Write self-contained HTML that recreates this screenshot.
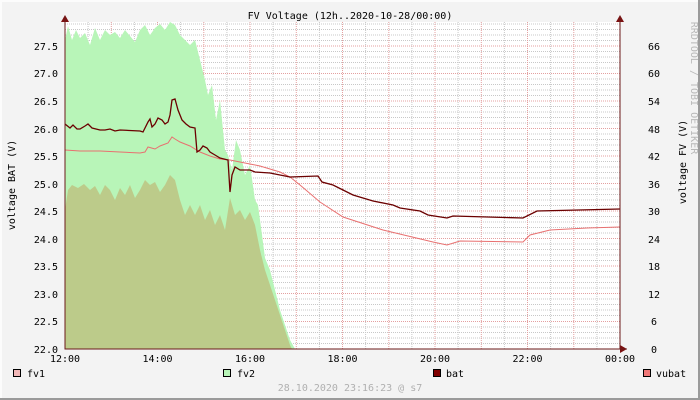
<!DOCTYPE html><html><head><style>body{margin:0}svg{display:block}text{font-family:"DejaVu Sans Mono","Liberation Mono",monospace;font-size:10px;fill:#000}</style></head><body>
<svg width="700" height="400" xmlns="http://www.w3.org/2000/svg">
<rect width="700" height="400" fill="#f3f3f3"/>
<rect x="0" y="0" width="700" height="2" fill="#fcfcfc"/><rect x="0" y="0" width="2" height="400" fill="#fcfcfc"/>
<rect x="698" y="0" width="2" height="400" fill="#9a9a9a"/><rect x="0" y="398" width="700" height="2" fill="#9a9a9a"/>
<rect x="65" y="22" width="555" height="327" fill="#fff"/>
<g stroke="#c8c8c8" stroke-width="1" stroke-dasharray="1,1">
<path d="M65 343.5H620M65 338H620M65 332.5H620M65 327H620M65 315.5H620M65 310H620M65 304.5H620M65 299H620M65 288H620M65 282.5H620M65 277H620M65 271.5H620M65 260.5H620M65 255H620M65 249.5H620M65 244H620M65 233H620M65 227.5H620M65 222H620M65 216.5H620M65 205.5H620M65 200H620M65 194.5H620M65 189H620M65 178H620M65 172.5H620M65 167H620M65 161.5H620M65 150.5H620M65 145H620M65 139.5H620M65 134H620M65 123H620M65 117.5H620M65 112H620M65 106.5H620M65 95.5H620M65 90H620M65 84.5H620M65 79H620M65 68H620M65 62.5H620M65 57H620M65 51.5H620M65 40.5H620M65 35H620M65 29.5H620M65 24H620"/>
<path d="M88.1 22V349M134.4 22V349M180.6 22V349M226.9 22V349M273.1 22V349M319.4 22V349M365.6 22V349M411.9 22V349M458.1 22V349M504.4 22V349M550.6 22V349M596.9 22V349"/>
</g>
<g stroke="#e4a0a0" stroke-width="1" stroke-dasharray="1,1">
<path d="M65 321.5H620M65 293.5H620M65 266H620M65 238.5H620M65 211H620M65 183.5H620M65 156H620M65 128.5H620M65 101H620M65 73.5H620M65 46H620"/>
<path d="M111.3 22V349M157.5 22V349M203.8 22V349M250 22V349M296.3 22V349M342.5 22V349M388.8 22V349M435 22V349M481.3 22V349M527.5 22V349M573.8 22V349"/>
</g>
<path fill="#b8f5b8" d="M65 349V40L68 26L72 40L76 30L80 38L85 33L90 45L95 28L100 40L105 30L110 35L115 32L120 38L125 30L130 36L135 42L140 30L145 25L150 35L155 28L160 24L165 30L170 22L175 25L180 35L185 40L190 45L195 40L200 60L205 80L208 95L212 85L216 120L220 100L225 150L228 155L232 170L236 140L240 150L245 175L250 165L255 200L258 205L262 235L265 258L270 270L275 290L280 310L285 325L290 340L295 349Z"/>
<path fill="#bccb8a" d="M65 349V210L68 190L72 185L78 188L84 184L90 190L95 186L100 195L105 185L110 190L115 200L120 188L125 195L130 185L135 198L140 190L145 180L150 185L155 182L160 192L165 185L170 175L175 180L180 200L185 215L190 205L195 215L200 205L205 220L210 210L215 225L220 215L225 230L230 198L235 215L240 210L245 220L250 212L255 225L260 250L265 270L270 285L275 300L280 315L285 330L290 345L292 349Z"/>
<polyline fill="none" stroke="#e87070" stroke-width="1" points="65,150 80,151 100,151 120,152 140,153 145,152 148,147 155,149 160,146 168,143 172,137 175,139 180,142 190,146 200,152 210,156 220,159 230,160 240,162 250,164 260,166 270,169 280,172 290,177 300,185 320,202 343,217 383,230 433,242 447,245 460,241 523,242 530,235 550,230 587,228 620,227"/>
<polyline fill="none" stroke="#6b0000" stroke-width="1.3" points="65,124 70,128 73,125 77,129 80,129 85,126 88,124 92,128 100,130 105,130 110,129 115,131 120,130 140,131 143,132 145,128 148,122 150,119 152,127 155,124 158,118 162,120 165,124 168,122 170,115 172,100 175,99 178,110 182,120 186,124 190,127 195,128 197,152 200,150 203,146 207,148 210,152 215,155 220,158 228,160 230,192 232,175 235,167 240,170 250,170 255,172 270,173 280,175 290,177 318,176 322,182 333,185 343,190 353,195 373,201 393,205 400,208 420,211 428,215 447,218 453,216 523,218 537,211 620,209"/>
<g fill="#7b1010"><path d="M61 22L65 15L69 22Z"/><path d="M620 345L627 349L620 353Z"/><path d="M616 22L620 15L624 22Z"/></g>
<path d="M65 16V349H627M620 16V349" stroke="#6b1a1a" stroke-width="1" fill="none"/>
<text x="350" y="19" text-anchor="middle">FV Voltage (12h..2020-10-28/00:00)</text>
<g text-anchor="end"><text x="58" y="353">22.0</text><text x="58" y="325">22.5</text><text x="58" y="298">23.0</text><text x="58" y="270">23.5</text><text x="58" y="243">24.0</text><text x="58" y="215">24.5</text><text x="58" y="188">25.0</text><text x="58" y="160">25.5</text><text x="58" y="133">26.0</text><text x="58" y="105">26.5</text><text x="58" y="77">27.0</text><text x="58" y="50">27.5</text></g>
<g text-anchor="middle"><text x="654" y="353">0</text><text x="654" y="325">6</text><text x="654" y="298">12</text><text x="654" y="270">18</text><text x="654" y="243">24</text><text x="654" y="215">30</text><text x="654" y="188">36</text><text x="654" y="160">42</text><text x="654" y="133">48</text><text x="654" y="105">54</text><text x="654" y="77">60</text><text x="654" y="50">66</text></g>
<g text-anchor="middle"><text x="65" y="362">12:00</text><text x="157.5" y="362">14:00</text><text x="250" y="362">16:00</text><text x="342.5" y="362">18:00</text><text x="435" y="362">20:00</text><text x="527.5" y="362">22:00</text><text x="620" y="362">00:00</text></g>
<text transform="translate(15,185) rotate(-90)" text-anchor="middle">voltage BAT (V)</text>
<text transform="translate(686,162) rotate(-90)" text-anchor="middle">voltage FV (V)</text>
<text transform="translate(691,88) rotate(90)" text-anchor="middle" style="fill:#b8b8b8">RRDTOOL / TOBI OETIKER</text>
<g stroke="#000" stroke-width="1"><rect x="13.5" y="369.5" width="7" height="7" fill="#f2b8b8"/><rect x="223.5" y="369.5" width="7" height="7" fill="#b8f5b8"/><rect x="433.5" y="369.5" width="7" height="7" fill="#800000"/><rect x="643.5" y="369.5" width="7" height="7" fill="#f07878"/></g>
<text x="27" y="377">fv1</text><text x="237" y="377">fv2</text><text x="446" y="377">bat</text><text x="656" y="377">vubat</text>
<text x="350" y="391" text-anchor="middle" style="fill:#b0b0b0">28.10.2020 23:16:23 @ s7</text>
</svg></body></html>
